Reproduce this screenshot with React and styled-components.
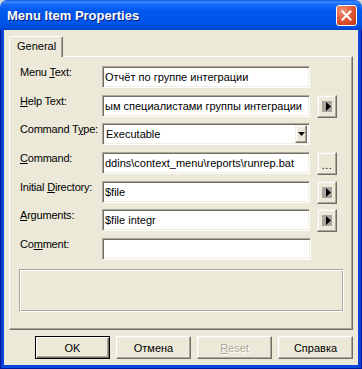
import React from "react";
import styled, { createGlobalStyle } from "styled-components";

const GlobalStyle = createGlobalStyle`
  html, body {
    margin: 0;
    padding: 0;
    background: #d8d8d8;
  }
  body {
    font-family: "Liberation Sans", Arial, sans-serif;
    font-size: 11px;
    color: #000;
  }
`;

const Window = styled.div`
  width: 362px;
  height: 369px;
  display: flex;
  flex-direction: column;
  border-radius: 7px 7px 0 0;
  overflow: hidden;
`;

const TitleBar = styled.div`
  height: 30px;
  flex-shrink: 0;
  display: flex;
  align-items: center;
  justify-content: space-between;
  padding: 0 5px 0 7px;
  box-sizing: border-box;
  background: linear-gradient(
    180deg,
    #0a5be8 0%,
    #3b8cff 7%,
    #1a6cf8 14%,
    #0058ee 35%,
    #0055ea 75%,
    #004cdc 92%,
    #0042c4 100%
  );
`;

const Title = styled.div`
  color: #fff;
  font-weight: bold;
  font-size: 13px;
  text-shadow: 1px 1px 0 #0a1c7a;
  padding-top: 1px;
`;

const CloseBtn = styled.div`
  width: 21px;
  height: 21px;
  box-sizing: border-box;
  border: 1px solid #fff;
  border-radius: 3px;
  background: radial-gradient(circle at 30% 25%, #f39a7c 0%, #e2623c 40%, #cf4420 75%, #b9361a 100%);
  display: flex;
  align-items: center;
  justify-content: center;
`;

const Frame = styled.div`
  flex: 1;
  display: flex;
  padding: 0 4px 4px;
  background: #0a47dd;
  box-shadow: inset 1px 0 0 #0019a0, inset -1px 0 0 #0019a0, inset 0 -1px 0 #0019a0,
    inset 3px 0 0 #0b3fd6, inset -3px 0 0 #0b3fd6;
`;

const Client = styled.div`
  flex: 1;
  display: flex;
  flex-direction: column;
  background: #ece9d8;
  padding: 6px 5px 0 5px;
`;

const TabStrip = styled.div`
  display: flex;
`;

const Tab = styled.div`
  position: relative;
  z-index: 1;
  height: 21px;
  box-sizing: border-box;
  padding: 0 6px 0 7px;
  line-height: 18px;
  background: #ece9d8;
  border: 1px solid;
  border-bottom: none;
  border-color: #fff #716f64 transparent #fff;
  border-radius: 2px 2px 0 0;
  box-shadow: inset -1px 0 0 #aca899;
  margin-bottom: -1px;
`;

const Panel = styled.div`
  height: 274px;
  box-sizing: border-box;
  border: 1px solid;
  border-color: #fff #716f64 #716f64 #fff;
  box-shadow: inset -1px -1px 0 #aca899;
  padding: 9px 0 0 10px;
  display: flex;
  flex-direction: column;
`;

const Form = styled.div`
  display: grid;
  grid-template-columns: 75px 208px 20px;
  grid-auto-rows: 22px;
  column-gap: 7px;
  row-gap: 6.67px;
`;

const Label = styled.div`
  line-height: 13px;
  white-space: nowrap;
  letter-spacing: -0.2px;
`;

const U = styled.span`
  text-decoration: underline;
  text-underline-offset: 1px;
`;

const Edit = styled.div`
  height: 22px;
  box-sizing: border-box;
  background: #fff;
  border: 1px solid;
  border-color: #aca899 #fff #fff #aca899;
  box-shadow: inset 1px 1px 0 #716f64, inset -1px -1px 0 #f1efe2;
  padding: 0 2px;
  display: flex;
  align-items: center;
  white-space: nowrap;
  overflow: hidden;
  margin-right: ${(p) => (p.$wide ? "-1px" : "0")};
`;

const Combo = styled(Edit)`
  padding: 2px 2px 2px 3px;
  justify-content: space-between;
`;

const ComboBtn = styled.div`
  width: 12px;
  height: 18px;
  box-sizing: border-box;
  background: #ece9d8;
  border: 1px solid;
  border-color: #f1efe2 #716f64 #716f64 #f1efe2;
  box-shadow: inset -1px -1px 0 #aca899, inset 1px 1px 0 #fff;
  display: flex;
  align-items: center;
  justify-content: center;
`;

const SideBtn = styled.div`
  width: 20px;
  height: 23px;
  box-sizing: border-box;
  background: #ece9d8;
  border: 1px solid;
  border-color: #f1efe2 #716f64 #716f64 #f1efe2;
  box-shadow: inset -1px -1px 0 #aca899, inset 1px 1px 0 #fff;
  display: flex;
  align-items: ${(p) => (p.$dots ? "flex-end" : "center")};
  justify-content: center;
  padding-bottom: ${(p) => (p.$dots ? "5px" : "0")};
  line-height: 8px;
  letter-spacing: 0.5px;
`;

const StaticBox = styled.div`
  margin: 9px 0 0 -1px;
  width: 325px;
  height: 43px;
  box-sizing: border-box;
  border: 1px solid;
  border-color: #aca899 #fff #fff #aca899;
  box-shadow: inset 1px 1px 0 #fff, inset -1px -1px 0 #aca899;
`;

const ButtonRow = styled.div`
  display: flex;
  justify-content: flex-end;
  gap: 6px;
  margin-top: 6px;
`;

const Button = styled.div`
  width: 75px;
  height: 23px;
  box-sizing: border-box;
  background: #ece9d8;
  border: 1px solid;
  border-color: ${(p) => (p.$default ? "#000" : "#fff #716f64 #716f64 #fff")};
  box-shadow: ${(p) =>
    p.$default
      ? "inset 1px 1px 0 #fff, inset -1px -1px 0 #716f64, inset -2px -2px 0 #aca899"
      : "inset -1px -1px 0 #aca899, inset 1px 1px 0 #f1efe2"};
  display: flex;
  align-items: center;
  justify-content: center;
  color: ${(p) => (p.$disabled ? "#aca899" : "#000")};
  text-shadow: ${(p) => (p.$disabled ? "1px 1px 0 #fff" : "none")};
`;

const ArrowIcon = () => (
  <svg width="10" height="11" viewBox="0 0 10 11">
    <rect x="0" y="0" width="10" height="11" fill="#a6a5a0" />
    <polygon points="4,1 9,5.5 4,10" fill="#000" />
  </svg>
);

const DownIcon = () => (
  <svg width="7" height="4" viewBox="0 0 7 4">
    <polygon points="0,0 7,0 3.5,4" fill="#000" />
  </svg>
);

const CloseIcon = () => (
  <svg width="11" height="11" viewBox="0 0 11 11">
    <path d="M1.5 1.5 L9.5 9.5 M9.5 1.5 L1.5 9.5" stroke="#fff" strokeWidth="2" strokeLinecap="square" />
  </svg>
);

const rows = [
  { label: <>Menu <U>T</U>ext:</>, value: "Отчёт по группе интеграции" },
  { label: <><U>H</U>elp Text:</>, value: "ым специалистами группы интеграции", side: "arrow" },
  { label: <>Command T<U>y</U>pe:</>, value: "Executable", combo: true },
  { label: <><U>C</U>ommand:</>, value: "ddins\\context_menu\\reports\\runrep.bat", side: "dots" },
  { label: <>Initial <U>D</U>irectory:</>, value: "$file", side: "arrow" },
  { label: <><U>A</U>rguments:</>, value: "$file integr", side: "arrow" },
  { label: <>Co<U>m</U>ment:</>, value: "", wide: true },
];

const App = () => {
  return (
    <>
      <GlobalStyle />
      <Window>
        <TitleBar>
          <Title>Menu Item Properties</Title>
          <CloseBtn>
            <CloseIcon />
          </CloseBtn>
        </TitleBar>
        <Frame>
          <Client>
            <TabStrip>
              <Tab>General</Tab>
            </TabStrip>
            <Panel>
              <Form>
                {rows.map((r, i) => (
                  <React.Fragment key={i}>
                    <Label>{r.label}</Label>
                    {r.combo ? (
                      <Combo>
                        <span>{r.value}</span>
                        <ComboBtn>
                          <DownIcon />
                        </ComboBtn>
                      </Combo>
                    ) : (
                      <Edit $wide={r.wide}>{r.value}</Edit>
                    )}
                    {r.side === "arrow" && (
                      <SideBtn>
                        <ArrowIcon />
                      </SideBtn>
                    )}
                    {r.side === "dots" && <SideBtn $dots>...</SideBtn>}
                    {!r.side && <div />}
                  </React.Fragment>
                ))}
              </Form>
              <StaticBox />
            </Panel>
            <ButtonRow>
              <Button $default>OK</Button>
              <Button>Отмена</Button>
              <Button $disabled>
                <span>
                  <U>R</U>eset
                </span>
              </Button>
              <Button>Справка</Button>
            </ButtonRow>
          </Client>
        </Frame>
      </Window>
    </>
  );
};

export default App;
